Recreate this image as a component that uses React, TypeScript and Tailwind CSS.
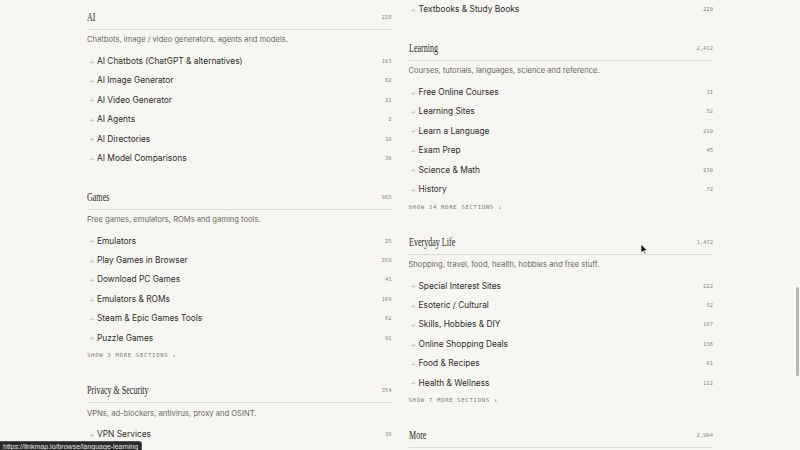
import React from 'react';

type Item = { name: string; count: string };
type Section = {
  title?: string;
  total?: string;
  desc?: string;
  items: Item[];
  more?: number;
};

const leftColumn: Section[] = [
  {
    title: 'AI',
    total: '228',
    desc: 'Chatbots, image / video generators, agents and models.',
    items: [
      { name: 'AI Chatbots (ChatGPT & alternatives)', count: '103' },
      { name: 'AI Image Generator', count: '62' },
      { name: 'AI Video Generator', count: '21' },
      { name: 'AI Agents', count: '2' },
      { name: 'AI Directories', count: '10' },
      { name: 'AI Model Comparisons', count: '30' },
    ],
  },
  {
    title: 'Games',
    total: '985',
    desc: 'Free games, emulators, ROMs and gaming tools.',
    items: [
      { name: 'Emulators', count: '25' },
      { name: 'Play Games in Browser', count: '358' },
      { name: 'Download PC Games', count: '41' },
      { name: 'Emulators & ROMs', count: '169' },
      { name: 'Steam & Epic Games Tools', count: '62' },
      { name: 'Puzzle Games', count: '91' },
    ],
    more: 3,
  },
  {
    title: 'Privacy & Security',
    total: '354',
    desc: 'VPNs, ad-blockers, antivirus, proxy and OSINT.',
    items: [{ name: 'VPN Services', count: '38' }],
  },
];

const rightColumn: Section[] = [
  {
    items: [{ name: 'Textbooks & Study Books', count: '220' }],
  },
  {
    title: 'Learning',
    total: '2,412',
    desc: 'Courses, tutorials, languages, science and reference.',
    items: [
      { name: 'Free Online Courses', count: '31' },
      { name: 'Learning Sites', count: '52' },
      { name: 'Learn a Language', count: '210' },
      { name: 'Exam Prep', count: '45' },
      { name: 'Science & Math', count: '230' },
      { name: 'History', count: '72' },
    ],
    more: 34,
  },
  {
    title: 'Everyday Life',
    total: '1,472',
    desc: 'Shopping, travel, food, health, hobbies and free stuff.',
    items: [
      { name: 'Special Interest Sites', count: '222' },
      { name: 'Esoteric / Cultural', count: '52' },
      { name: 'Skills, Hobbies & DIY', count: '187' },
      { name: 'Online Shopping Deals', count: '136' },
      { name: 'Food & Recipes', count: '61' },
      { name: 'Health & Wellness', count: '112' },
    ],
    more: 7,
  },
  {
    title: 'More',
    total: '2,904',
    items: [],
  },
];

const mono = "font-['DejaVu_Sans_Mono','Liberation_Mono',monospace]";

function SectionBlock({ section }: { section: Section }) {
  return (
    <section className="mb-[18.3px]">
      {section.title && (
        <div className="h-[25px] flex items-center justify-between border-b border-[#dcdad4]">
          <h2 className="inline-block origin-left scale-x-[0.67] text-[12px] leading-none text-[#2b2a28] font-['Liberation_Serif',serif] whitespace-nowrap">
            {section.title}
          </h2>
          <span className={`${mono} text-[5.5px] text-[#8a8884]`}>{section.total}</span>
        </div>
      )}
      {section.desc && (
        <p className="h-[18px] pt-[2px] flex items-center text-[7.6px] text-[#6b6964]">{section.desc}</p>
      )}
      {section.items.length > 0 && (
        <ul className={section.title ? 'mt-[2px]' : ''}>
          {section.items.map((item) => (
            <li key={item.name} className="h-[19.4px] pt-[3px] flex items-center justify-between">
              <span className="flex items-center">
                <span className="w-[10px] pl-[1.5px] text-[6px] text-[#b3b1ab]">→</span>
                <span className="text-[8.35px] text-[#2e2d2a]">{item.name}</span>
              </span>
              <span className={`${mono} text-[5.5px] text-[#8a8884]`}>{item.count}</span>
            </li>
          ))}
        </ul>
      )}
      {section.more && (
        <div className={`${mono} mt-[2px] h-[12px] pt-[3px] flex items-center text-[5.6px] tracking-[0.7px] text-[#7d7b76]`}>
          SHOW {section.more} MORE SECTIONS ↓
        </div>
      )}
    </section>
  );
}

export default function App() {
  return (
    <div className="relative h-[450px] w-[800px] overflow-hidden bg-[#f7f6f2] font-['Inter','Liberation_Sans',sans-serif]">
      <div className="mx-auto w-[626px] grid grid-cols-2 gap-[17px] items-start">
        <div className="pt-[5px]">
          {leftColumn.map((s, i) => (
            <SectionBlock key={i} section={s} />
          ))}
        </div>
        <div className="-mt-[1.7px]">
          {rightColumn.map((s, i) => (
            <SectionBlock key={i} section={s} />
          ))}
        </div>
      </div>

      {/* scrollbar thumb */}
      <div className="absolute right-[1px] top-[287px] h-[89px] w-[3px] rounded-full bg-[#b7b6b2]" />

      {/* mouse cursor */}
      <svg className="absolute left-[640px] top-[243px]" width="8" height="12" viewBox="0 0 8 12">
        <path d="M1 1 L1 10 L3.2 8 L4.8 11.3 L6 10.7 L4.5 7.6 L7.3 7.6 Z" fill="#111" stroke="#fff" strokeWidth="0.8" />
      </svg>

      {/* link status bar */}
      <div className="absolute left-0 bottom-0 h-[9px] px-[3px] flex items-center rounded-tr-[3px] bg-[#2a2a2a] border-t border-r border-[#555] text-[7px] leading-none text-[#e8e8e8] font-['Liberation_Sans',sans-serif] whitespace-nowrap">
        https://linkmap.io/browse/language-learning
      </div>
    </div>
  );
}
